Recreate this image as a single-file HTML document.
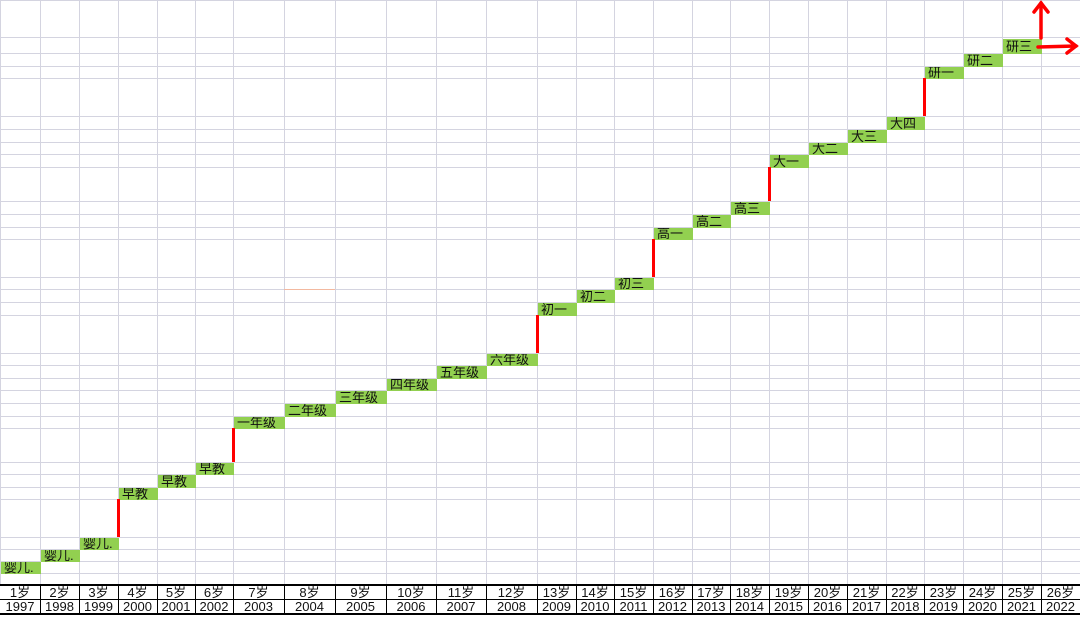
<!DOCTYPE html>
<html><head><meta charset="utf-8"><style>
body{margin:0;width:1080px;height:617px;overflow:hidden;background:#fff;position:relative;font-family:"Liberation Sans","Noto Sans CJK SC",sans-serif}
.h{position:absolute;left:0;width:1080px;height:1px;background:#d4d4e0}
.v{position:absolute;top:0;width:1px;height:585px;background:#d4d4e0}
.g{position:absolute;background:#92d050;font-size:13px;color:#111;padding-left:3px;box-sizing:border-box;white-space:nowrap;overflow:hidden}
.r{position:absolute;width:3px;background:#f00}
.c{position:absolute;text-align:center;font-size:13px;line-height:14px;color:#111;border-right:1px solid #000;box-sizing:border-box}
</style></head><body>
<div id="w"></div>
<script>
var cols=[0,40,79,118,157,195,233,284,335,386,436,486,537,576,614,653,692,730,769,808,847,886,924,963,1002,1041,1080];
var hs=[0,37,53,66,78,116,129,142,154,167,201,214,227,239,277,289,302,315,353,365,378,390,403,416,428,462,474,487,499,537,549,561,573];
var h='';
hs.forEach(function(y){h+='<div class="h" style="top:'+y+'px"></div>'});
cols.forEach(function(x){h+='<div class="v" style="left:'+x+'px"></div>'});
var cells=[["婴儿.",561,573],["婴儿.",549,561],["婴儿.",537,549],["早教",487,499],["早教",474,487],["早教",462,474],["一年级",416,428],["二年级",403,416],["三年级",390,403],["四年级",378,390],["五年级",365,378],["六年级",353,365],["初一",302,315],["初二",289,302],["初三",277,289],["高一",227,239],["高二",214,227],["高三",201,214],["大一",154,167],["大二",142,154],["大三",129,142],["大四",116,129],["研一",66,78],["研二",53,66],["研三",38,53]];
cells.forEach(function(c,i){h+='<div class="g" style="left:'+(cols[i]+1)+'px;width:'+(cols[i+1]-cols[i])+'px;top:'+(c[1]+1)+'px;height:'+(c[2]-c[1])+'px;line-height:'+(c[2]-c[1])+'px">'+c[0]+'</div>'});
[[118,499,537],[233,428,462],[537,315,353],[653,239,277],[769,167,201],[924,78,116]].forEach(function(r){h+='<div class="r" style="left:'+(r[0]-1)+'px;top:'+r[1]+'px;height:'+(r[2]-r[1])+'px"></div>'});
h+='<div style="position:absolute;left:284px;top:289px;width:51px;height:1px;background:#f3b9a0"></div>';
h+='<div style="position:absolute;left:0;top:584px;width:1080px;height:31px;border-top:2px solid #000;border-bottom:2px solid #000;box-sizing:border-box"></div>';
h+='<div style="position:absolute;left:0;top:599px;width:1080px;height:1px;background:#000"></div>';
for(var i=0;i<26;i++){var x=cols[i],w=cols[i+1]-x+1;
h+='<div class="c" style="left:'+x+'px;width:'+w+'px;top:586px;height:14px">'+(i+1)+'岁</div>';
h+='<div class="c" style="left:'+x+'px;width:'+w+'px;top:600px;height:14px">'+(1997+i)+'</div>';}
h+='<svg style="position:absolute;left:0;top:0" width="1080" height="617"><g stroke="#f00" stroke-width="3.5" fill="none" stroke-linecap="round"><line x1="1041" y1="38" x2="1041" y2="3"/><polyline points="1034,12 1041,3 1048,12"/><line x1="1038" y1="47" x2="1076" y2="46"/><polyline points="1067,39 1076,46 1067,53"/></g></svg>';
document.getElementById('w').innerHTML=h;
</script>
</body></html>
